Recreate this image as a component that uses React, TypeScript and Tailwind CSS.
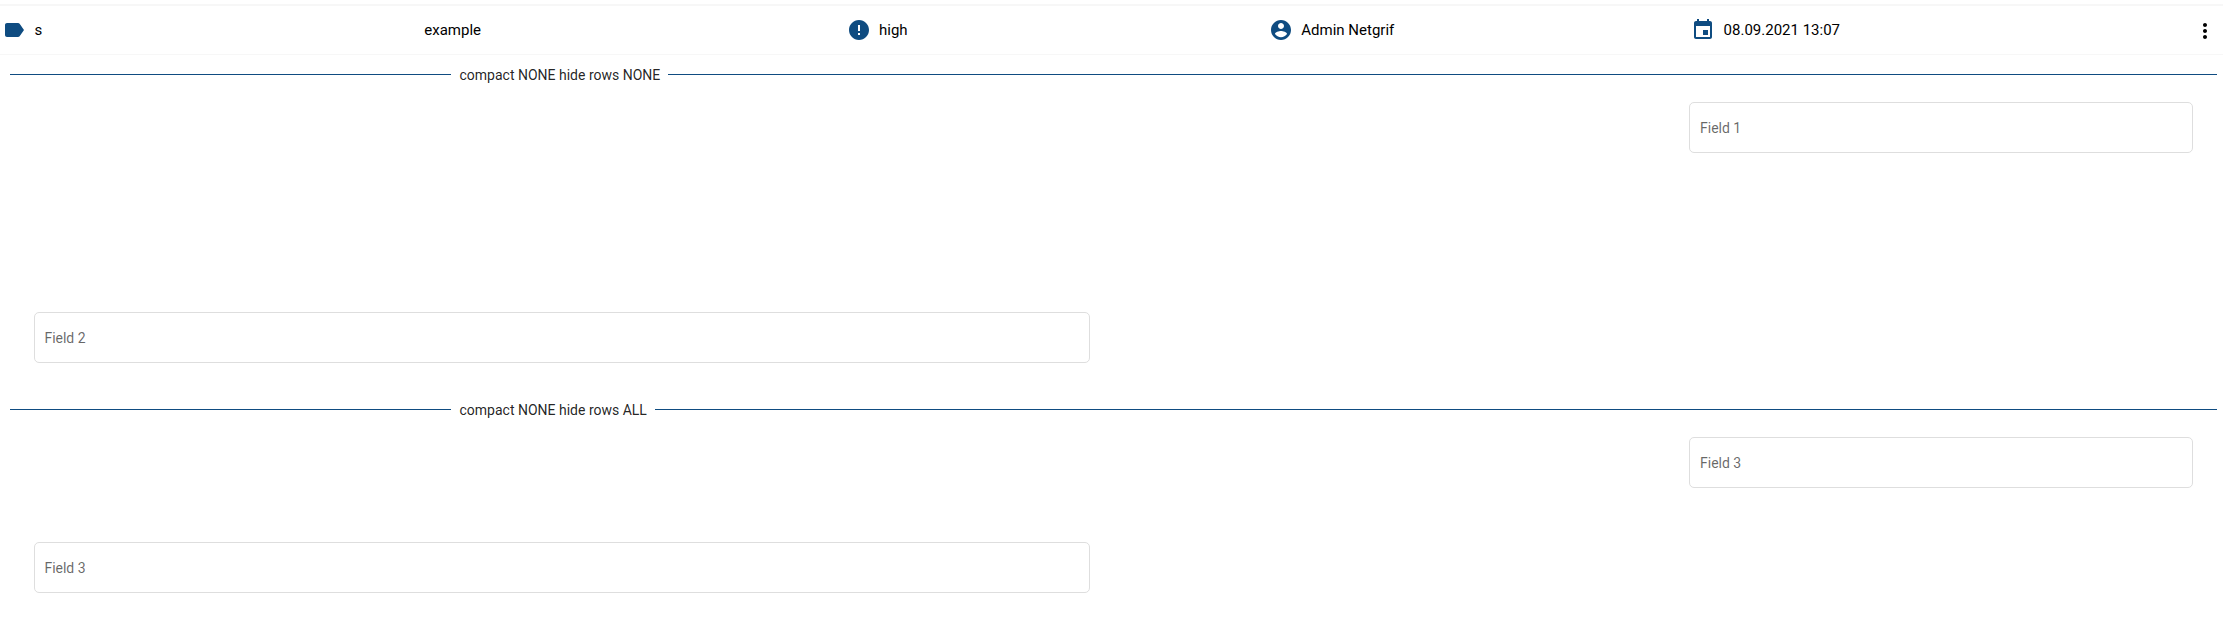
import type { ReactNode } from "react";

const icons = {
  label:
    "M17.63 5.84C17.27 5.33 16.67 5 16 5L5 5.01C3.9 5.01 3 5.9 3 7v10c0 1.1.9 1.99 2 1.99L16 19c.67 0 1.27-.33 1.63-.84L22 12l-4.37-6.16z",
  error:
    "M12 2C6.48 2 2 6.48 2 12s4.48 10 10 10 10-4.48 10-10S17.52 2 12 2zm1 15h-2v-2h2v2zm0-4h-2V7h2v6z",
  account:
    "M12 2C6.48 2 2 6.48 2 12s4.48 10 10 10 10-4.48 10-10S17.52 2 12 2zm0 3c1.66 0 3 1.34 3 3s-1.34 3-3 3-3-1.34-3-3 1.34-3 3-3zm0 14.2c-2.5 0-4.71-1.28-6-3.22.03-1.99 4-3.08 6-3.08 1.99 0 5.97 1.09 6 3.08-1.29 1.94-3.5 3.22-6 3.22z",
  event:
    "M17 12h-5v5h5v-5zM16 1v2H8V1H6v2H5c-1.11 0-1.99.9-1.99 2L3 19c0 1.1.89 2 2 2h14c1.1 0 2-.9 2-2V5c0-1.1-.9-2-2-2h-1V1h-2zm3 18H5V8h14v11z",
  more: "M12 8c1.1 0 2-.9 2-2s-.9-2-2-2-2 .9-2 2 .9 2 2 2zm0 2c-1.1 0-2 .9-2 2s.9 2 2 2 2-.9 2-2-.9-2-2-2zm0 6c-1.1 0-2 .9-2 2s.9 2 2 2 2-.9 2-2-.9-2-2-2z",
};

function Icon({ name }: { name: keyof typeof icons }) {
  return (
    <svg viewBox="0 0 24 24" className="size-6 shrink-0" fill="currentColor" aria-hidden="true">
      <path d={icons[name]} />
    </svg>
  );
}

function Cell({ icon, children }: { icon?: keyof typeof icons; children: ReactNode }) {
  return (
    <div className="flex w-[422.3px] items-center gap-[8.4px]">
      {icon && (
        <span className="text-[#0f4c81]">
          <Icon name={icon} />
        </span>
      )}
      <span className="pt-px">{children}</span>
    </div>
  );
}

function Divider({ title }: { title: string }) {
  return (
    <div className="flex h-5 items-center pr-1.5 pl-2.5 text-sm text-black/87">
      <div className="h-px w-[441px] bg-[#0f4c81]" />
      <span className="pt-0.5 pr-2 pl-[8.5px] whitespace-nowrap">{title}</span>
      <div className="h-px flex-1 bg-[#0f4c81]" />
    </div>
  );
}

function Field({ label, wide = false }: { label: string; wide?: boolean }) {
  return (
    <div
      className={`flex h-[51px] items-center rounded-[5px] border border-[#dedede] text-sm text-black/60 ${
        wide ? "ml-[34px] w-[1056px] px-[9.4px]" : "ml-auto mr-[30px] w-[504px] px-2.5"
      }`}
    >
      {label}
    </div>
  );
}

export default function App() {
  return (
    <main className="h-[624px] overflow-hidden bg-white pt-1 font-['Roboto',sans-serif]">
      <header className="flex h-[51px] items-center border-t-2 border-b border-[#f7f7f7] pr-1.5 pl-0.5 text-[15px] text-black">
        <Cell icon="label">s</Cell>
        <Cell>example</Cell>
        <Cell icon="error">high</Cell>
        <Cell icon="account">Admin Netgrif</Cell>
        <Cell icon="event">08.09.2021 13:07</Cell>
        <button type="button" aria-label="More" className="mt-0.5 ml-auto">
          <Icon name="more" />
        </button>
      </header>
      <section className="flex flex-col pt-[9px]">
        <Divider title="compact NONE hide rows NONE" />
        <div className="flex flex-col gap-[159px] pt-[18px]">
          <Field label="Field 1" />
          <Field label="Field 2" wide />
        </div>
      </section>
      <section className="flex flex-col pt-9">
        <Divider title="compact NONE hide rows ALL" />
        <div className="flex flex-col gap-[54px] pt-[18px]">
          <Field label="Field 3" />
          <Field label="Field 3" wide />
        </div>
      </section>
    </main>
  );
}
